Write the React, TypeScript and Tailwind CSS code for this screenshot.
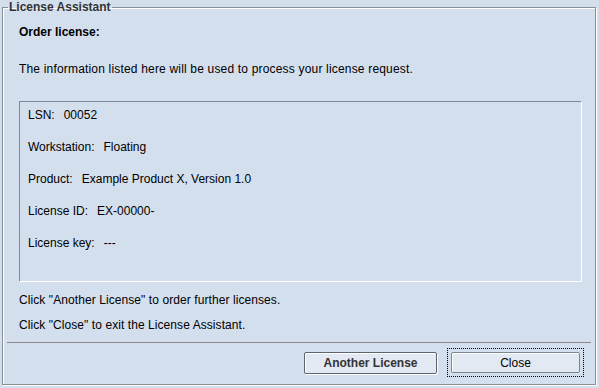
import React from 'react';

const rows = [
  { label: 'LSN:', value: '00052' },
  { label: 'Workstation:', value: 'Floating' },
  { label: 'Product:', value: 'Example Product X, Version 1.0' },
  { label: 'License ID:', value: 'EX-00000-' },
  { label: 'License key:', value: '---' },
];

export default function App() {
  return (
    <div className="w-[599px] h-[388px] bg-[#d4dfee] pl-[2px] text-[12px] leading-[14px] text-black" style={{ fontFamily: '"Liberation Sans", Arial, sans-serif' }}>
      <fieldset className="w-[594px] h-[385px] border border-[#8a8e96] px-[5px] shadow-[inset_1px_1px_0_#ffffff,1px_1px_0_#ffffff] flex flex-col">
        <legend className="px-[1px] font-bold text-[#333333] leading-[14px]">License Assistant</legend>

        <div className="pl-[11px] pr-[9px] flex flex-col">
          <p className="mt-[11px] font-bold">Order license:</p>
          <p className="mt-[23px] tracking-[0.18px]">The information listed here will be used to process your license request.</p>

          <div className="mt-[25px] h-[180px] border-t border-l border-[#7d8799] shadow-[1px_1px_0_#ffffff] pt-[6px] pl-[8px] flex flex-col gap-[18px]">
            {rows.map(r => (
              <div key={r.label} className="flex gap-[9px]">
                <span>{r.label}</span>
                <span>{r.value}</span>
              </div>
            ))}
          </div>

          <p className="mt-[12px] tracking-[0.08px]">Click "Another License" to order further licenses.</p>
          <p className="mt-[11px] tracking-[0.07px]">Click "Close" to exit the License Assistant.</p>
        </div>

        <div className="mt-[10px] mx-[-1px] border-t border-[#8a8a8a]" />

        <div className="flex justify-end gap-[10px] pr-[6px] mt-[5px]">
          <button className="w-[133px] h-[22px] mt-[4px] rounded-[2px] border border-[#5d6470] bg-[#e3e9f3] shadow-[inset_1px_1px_0_#ffffff,1px_1px_0_#ffffff] font-bold text-[#333333]">
            Another License
          </button>
          <div className="border border-dotted border-black p-[3px]">
            <button className="w-[129px] h-[21px] rounded-[2px] border border-[#7d8592] bg-[#e3e9f3] shadow-[inset_1px_1px_0_#ffffff] text-black">
              Close
            </button>
          </div>
        </div>
      </fieldset>
    </div>
  );
}
